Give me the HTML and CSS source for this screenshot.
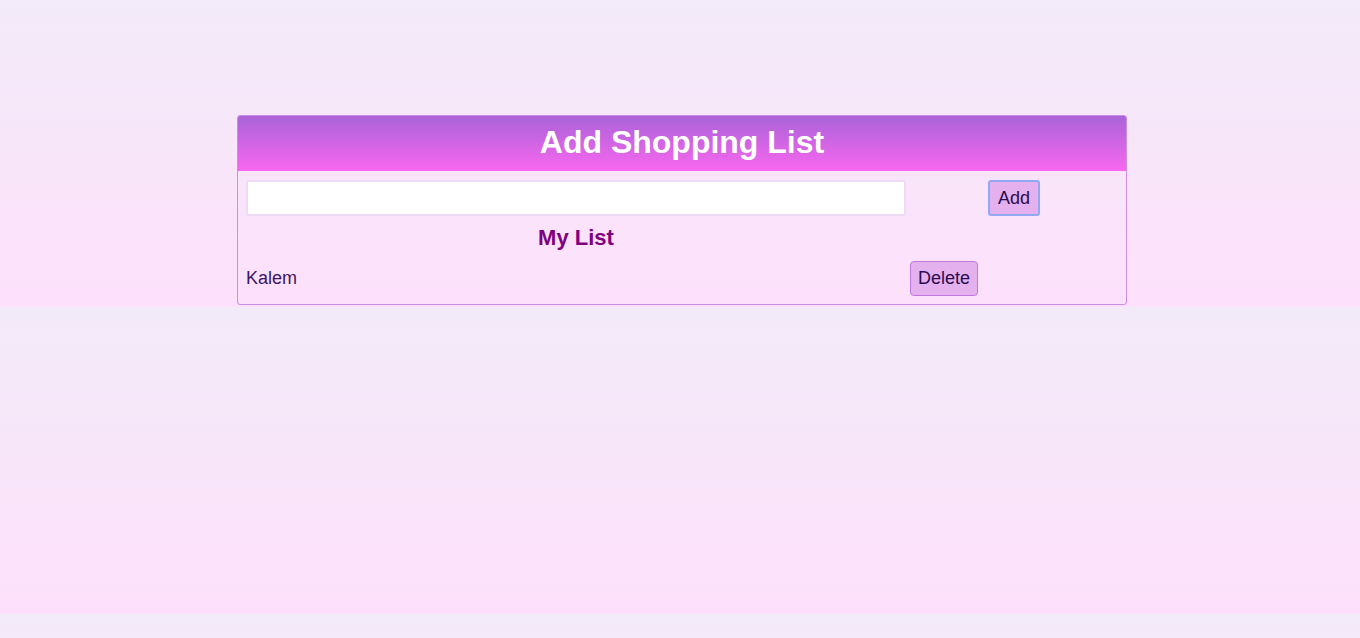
FILE: index.html
```html
<!DOCTYPE html>
<html lang="en">
<head>
<meta charset="utf-8">
<title>Add Shopping List</title>
<link rel="stylesheet" href="styles.css">
</head>
<body>
<div class="page">
  <div class="card">
    <div class="card-header">
      <h1 class="title">Add Shopping List</h1>
    </div>
    <div class="card-body">
      <input class="item-input" type="text" aria-label="Item">
      <div class="add-cell"><button class="btn btn-add">Add</button></div>
      <h2 class="list-title">My List</h2>
      <div></div>
      <div class="item-name">Kalem</div>
      <div class="item-action"><button class="btn btn-delete">Delete</button></div>
    </div>
  </div>
</div>
</body>
</html>
```

FILE: styles.css
```css
html {
  background: none;
}
body {
  margin: 0;
  font-family: "Liberation Sans", Arial, sans-serif;
  background: linear-gradient(to bottom, #f3ebf9, #fde0fb);
}
.page {
  padding: 115px 0 1.5px 0;
}
.card {
  width: 888px;
  margin-left: 237px;
  border: 1px solid #c98ee8;
  border-radius: 3px;
  overflow: hidden;
}
.card-header {
  background: linear-gradient(to bottom, #a963d8, #f967f0);
  padding: 8px 0 10px;
  text-align: center;
}
.title {
  margin: 0;
  font-size: 32px;
  line-height: 37px;
  font-weight: bold;
  color: #ffffff;
}
.card-body {
  display: grid;
  grid-template-columns: 660px 1fr;
  column-gap: 4px;
  padding: 9px 8px 8px;
}
.item-input {
  box-sizing: border-box;
  height: 36px;
  width: 100%;
  margin: 0;
  border: 2px solid #eddaf5;
  border-radius: 3px;
  background: #ffffff;
  font: inherit;
  font-size: 18px;
}
.add-cell {
  display: flex;
  justify-content: center;
}
.btn {
  box-sizing: border-box;
  margin: 0;
  font-family: "Liberation Sans", Arial, sans-serif;
  font-size: 18px;
  color: #2b0b4f;
  background: #e4b0ee;
  cursor: pointer;
}
.btn-add {
  width: 52px;
  height: 36px;
  padding: 0;
  border: 2px solid #92a8f4;
  border-radius: 3px;
}
.btn-delete {
  width: 68px;
  height: 35px;
  padding: 0;
  border: 1px solid #c07ade;
  border-radius: 4px;
}
.list-title {
  margin: 9px 0 10px;
  text-align: center;
  font-size: 22px;
  line-height: 26px;
  font-weight: bold;
  color: #800080;
}
.item-name {
  align-self: center;
  font-size: 18px;
  line-height: 21px;
  color: #3d1466;
  padding-top: 0;
}
.item-action {
  display: flex;
}
```
